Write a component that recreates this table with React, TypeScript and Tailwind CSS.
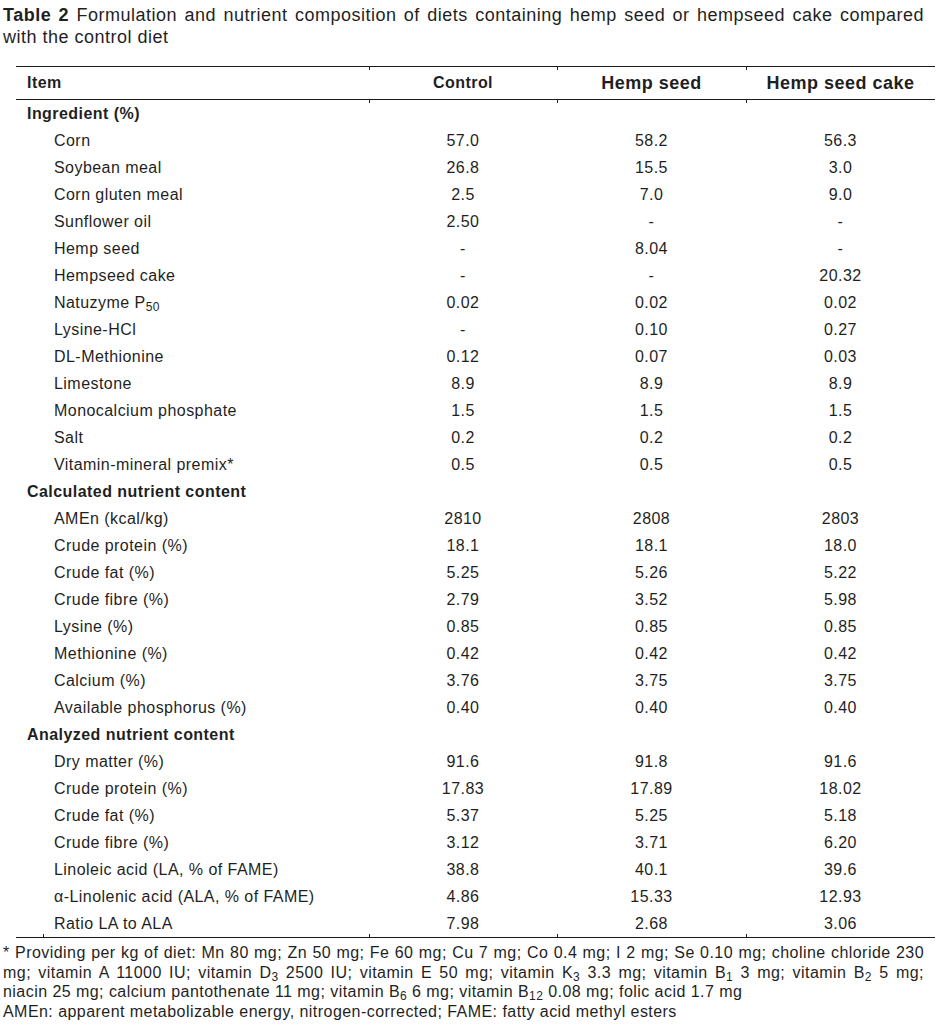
import type { ReactNode } from 'react'

type Row = { label: ReactNode; values?: string[]; section?: boolean }

const rows: Row[] = [
  { label: 'Ingredient (%)', section: true },
  { label: 'Corn', values: ['57.0', '58.2', '56.3'] },
  { label: 'Soybean meal', values: ['26.8', '15.5', '3.0'] },
  { label: 'Corn gluten meal', values: ['2.5', '7.0', '9.0'] },
  { label: 'Sunflower oil', values: ['2.50', '-', '-'] },
  { label: 'Hemp seed', values: ['-', '8.04', '-'] },
  { label: 'Hempseed cake', values: ['-', '-', '20.32'] },
  { label: <>Natuzyme P<sub>50</sub></>, values: ['0.02', '0.02', '0.02'] },
  { label: 'Lysine-HCl', values: ['-', '0.10', '0.27'] },
  { label: 'DL-Methionine', values: ['0.12', '0.07', '0.03'] },
  { label: 'Limestone', values: ['8.9', '8.9', '8.9'] },
  { label: 'Monocalcium phosphate', values: ['1.5', '1.5', '1.5'] },
  { label: 'Salt', values: ['0.2', '0.2', '0.2'] },
  { label: 'Vitamin-mineral premix*', values: ['0.5', '0.5', '0.5'] },
  { label: 'Calculated nutrient content', section: true },
  { label: 'AMEn (kcal/kg)', values: ['2810', '2808', '2803'] },
  { label: 'Crude protein (%)', values: ['18.1', '18.1', '18.0'] },
  { label: 'Crude fat (%)', values: ['5.25', '5.26', '5.22'] },
  { label: 'Crude fibre (%)', values: ['2.79', '3.52', '5.98'] },
  { label: 'Lysine (%)', values: ['0.85', '0.85', '0.85'] },
  { label: 'Methionine (%)', values: ['0.42', '0.42', '0.42'] },
  { label: 'Calcium (%)', values: ['3.76', '3.75', '3.75'] },
  { label: 'Available phosphorus (%)', values: ['0.40', '0.40', '0.40'] },
  { label: 'Analyzed nutrient content', section: true },
  { label: 'Dry matter (%)', values: ['91.6', '91.8', '91.6'] },
  { label: 'Crude protein (%)', values: ['17.83', '17.89', '18.02'] },
  { label: 'Crude fat (%)', values: ['5.37', '5.25', '5.18'] },
  { label: 'Crude fibre (%)', values: ['3.12', '3.71', '6.20'] },
  { label: 'Linoleic acid (LA, % of FAME)', values: ['38.8', '40.1', '39.6'] },
  { label: 'α-Linolenic acid (ALA, % of FAME)', values: ['4.86', '15.33', '12.93'] },
  { label: 'Ratio LA to ALA', values: ['7.98', '2.68', '3.06'] },
]

const cols = 'grid grid-cols-[353px_188px_189px_189px]'

// little vertical marks left by the source table at column edges
function Tick({ pos, left = 'left-0' }: { pos: 'top' | 'bottom'; left?: string }) {
  return (
    <span
      className={`absolute ${left} w-px h-[3px] bg-[#222] ${pos === 'top' ? 'top-0' : 'bottom-0'}`}
    />
  )
}

function JLine({ children, last }: { children: ReactNode; last?: boolean }) {
  return (
    <div className={last ? '' : 'text-justify [text-align-last:justify]'}>{children}</div>
  )
}

export default function App() {
  return (
    <div className="w-[939px] min-h-[1028px] bg-white text-[#1f1f1f] font-['Liberation_Sans',Arial,sans-serif] pt-[4px] pl-[3px] pr-[15px]">
      <div className="text-[18px] leading-[22px] tracking-[0.5px]">
        <JLine>
          <b className="font-bold">Table 2</b> Formulation and nutrient composition of diets containing hemp seed or hempseed cake compared
        </JLine>
        <JLine last>with the control diet</JLine>
      </div>

      <div className="ml-[13px] mt-[18px] w-[919px] text-[16px] tracking-[0.45px]">
        <div className={`${cols} border-t border-b border-[#1a1a1a] h-[34px] items-center font-bold`}>
          <div className="pl-[11px]">Item</div>
          <div className="relative h-full flex items-center justify-center">
            <Tick pos="top" />
            Control
          </div>
          <div className="relative h-full flex items-center justify-center text-[18px] tracking-[0.5px]">
            <Tick pos="top" />
            Hemp seed
          </div>
          <div className="relative h-full flex items-center justify-center text-[18px] tracking-[0.5px]">
            <Tick pos="top" />
            Hemp seed cake
          </div>
        </div>

        <div className="border-b border-[#1a1a1a]">
          {rows.map((r, i) => (
            <div key={i} className={`${cols} h-[27px] items-center`}>
              <div className={`relative h-full flex items-center ${r.section ? 'pl-[11px] font-bold' : 'pl-[38px]'}`}>
                {i === rows.length - 1 && <Tick pos="bottom" left="left-[27px]" />}
                <span>{r.label}</span>
              </div>
              {[0, 1, 2].map(c => (
                <div key={c} className="relative h-full flex items-center justify-center">
                  {i === 0 && <Tick pos="top" />}
                  {i === rows.length - 1 && <Tick pos="bottom" />}
                  {r.values?.[c] ?? ''}
                </div>
              ))}
            </div>
          ))}
        </div>
      </div>

      <div className="mt-[5px] text-[16px] leading-[19.5px] tracking-[0.45px]">
        <JLine>* Providing per kg of diet: Mn 80 mg; Zn 50 mg; Fe 60 mg; Cu 7 mg; Co 0.4 mg; I 2 mg; Se 0.10 mg; choline chloride 230</JLine>
        <JLine>
          mg; vitamin A 11000 IU; vitamin D<sub>3</sub> 2500 IU; vitamin E 50 mg; vitamin K<sub>3</sub> 3.3 mg; vitamin B<sub>1</sub> 3 mg; vitamin B<sub>2</sub> 5 mg;
        </JLine>
        <JLine last>
          niacin 25 mg; calcium pantothenate 11 mg; vitamin B<sub>6</sub> 6 mg; vitamin B<sub>12</sub> 0.08 mg; folic acid 1.7 mg
        </JLine>
        <JLine last>AMEn: apparent metabolizable energy, nitrogen-corrected; FAME: fatty acid methyl esters</JLine>
      </div>
    </div>
  )
}
